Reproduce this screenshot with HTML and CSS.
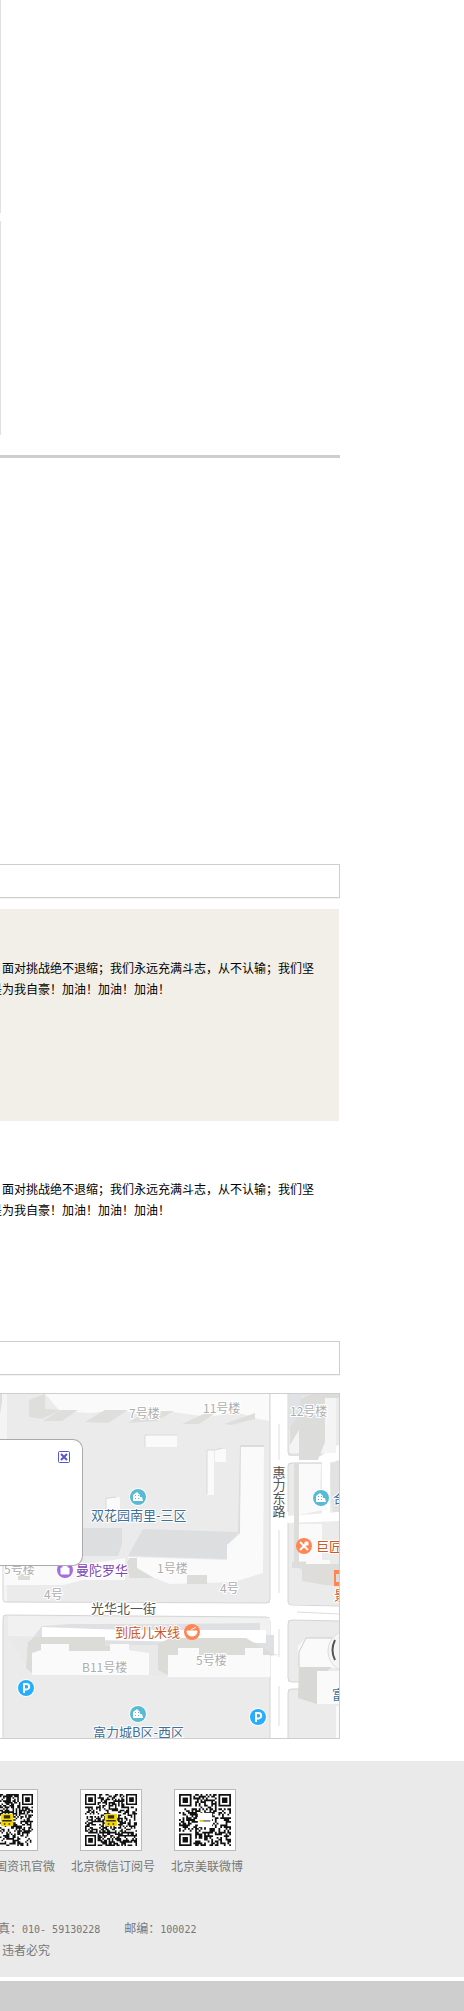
FILE: index.html
```
<!DOCTYPE html>
<html lang="zh-CN">
<head>
<meta charset="utf-8">
<title>北京美联</title>
<link rel="stylesheet" href="styles.css">
</head>
<body>
<main class="page">
  <section class="gallery"><div class="rail"></div><div class="rail"></div></section>
  <section class="showcase"></section>
  <div class="bar"></div>
  <article class="story story-tint"><p>，面对挑战绝不退缩；我们永远充满斗志，从不认输；我们坚<br>是为我自豪！加油！加油！加油！</p></article>
  <article class="story"><p>，面对挑战绝不退缩；我们永远充满斗志，从不认输；我们坚<br>是为我自豪！加油！加油！加油！</p></article>
  <div class="bar bar-map"></div>
  <section class="map">
    <svg class="map-art" viewBox="0 0 339 344" role="img" aria-label="地图">
      <defs>
        <g id="estate"><circle r="9" fill="#fff"/><circle r="8" fill="#58bad3"/><path d="M-5 4v-6l4-3 3 3v2h2l1 4zM-3-2v1h1v-1zm3 0v1h1v-1zm-3 3v1h1V1zm3 0v1h1V1z" fill="#fff" fill-rule="evenodd"/></g>
        <g id="parking"><circle r="9" fill="#fff"/><circle r="8" fill="#27adfc"/><path d="M-2 5v-9h2.500a2.700 2.700 0 0 1 0 5.400H-2" fill="none" stroke="#fff" stroke-width="2"/></g>
      </defs>
      <rect width="339" height="344" fill="#ebebeb"/>
      <path d="M0 0h7v210H0z" fill="#f4f4f4"/><path d="M0 0h2v8l-2 12z" fill="#ddd"/>
      <!-- roads -->
      <path d="M270 0h18v344h-18zM0 208l270 1v14L0 221zM288 210l51 2v15l-51-1zM288 62h30q8-1 12-8l9-3v17l-51 1zM288 122l51-4v9l-51 2zM288 288l51-1v7l-51 1zM322 68h8v54h-8zM0 165h3v179H0z" fill="#fff"/>
      <path d="M3 172v33q0 3 3 3l260 1q4 0 4-4V0M3 344V224q0-3 3-3l260 2q4 0 4 4v117M288 0v58q0 3 4 3h30M288 118V72q0-3 4-3h30M288 129v79q0 3 4 3l47 1M339 227l-47-1q-4 0-4 4v54q0 4 4 4h34M288 344v-45q0-4 4-4h34" fill="none" stroke="#d5d5d5"/>
      <path d="M279 30v36M279 136v63M279 235v28M279 292v40M297 218l42 2" stroke="#ddd"/>
      <!-- north buildings -->
      <path d="M45 0h224v27l-15-3-17-6-29 5-35-5-18 5-35-7-30 3-30-2z" fill="#fafafa"/>
      <path d="M29 6L45 0v16l-16 7zM43 27l17-11h18l-16 11zM85 28l20-12h23l-20 13zM128 29l18-12h28l-17 10zM182 30l28-13h9l-20 13zM224 30l31-11v6l-24 6zM29 23l16-8 15 1-18 9z" fill="#dededc"/>
      <path d="M145 41h32v12h-32zM106 105l14-2v20h-14zM207 56h7v45h-7zM215 55h11v13h-11z" fill="#fafafa"/>
      <path d="M145 53V41h32M106 122v-18l10-1M207 100V56h8l8-2" fill="none" stroke="#d9d9d9"/>
      <path d="M83 134h39v16l-4 12H83zM143 135l95 3v2l-11 11v14l-99-3z" fill="#dcdee0"/>
      <path d="M238 138l2-87h24v2h-22l-2 87z" fill="#dcdcdc"/>
      <path d="M241 53h23l-1 126-13 4-17 5-63 2-15-6-27-2V163l99 3v-15l13-11zM4 172h73l48-8v22H83l-20 5H4z" fill="#fafafa"/>
      <path d="M129 164h8v10l17 10h-24l-5-10zM187 181h20v9h-20zM18 181l12-3v8H18z" fill="#dcdcda"/>
      <path d="M290 2h46v57h-46z" fill="#f4f4f4"/>
      <path d="M301 4l10-4h28v4h-14v44l-7 18h-19V36l-9 15V12z" fill="#dcdcda"/><path d="M289 36l12-20V3l9-3h-21z" fill="#e1e2e5"/>
      <path d="M299 70h22l-1 29 8 16-29 6zM299 130h23v36h8v7h-24v-6h-7z" fill="#fafafa"/><path d="M294 69h5v105h-5zM306 170h33v10h-33z" fill="#dddddb"/>
      <path d="M331 69l8-3v52h-6q-4-24-2-52z" fill="#e2e2e2"/>
      <path d="M302 174h28l9 2v16l-14-1-23-4z" fill="#deddda"/><path d="M292 168h14v6l-6 1v-1h-8z" fill="#dddddb"/>
      <!-- south buildings -->
      <path d="M8 222l262 2v18H8z" fill="#f1f1f1"/>
      <path d="M8 243h34l28-11 192 4v47H168v-1H149v-1H32z" fill="#e9e9e9"/>
      <path d="M42 232l28-2h100l90-1v12h14v19l6 1-18 1-13-11H110L76 247l-50 8 8-13z" fill="#dfe0e3"/>
      <path d="M42 233l54 2 38 1h132v13l-70-1-154-3z" fill="#fff"/>
      <path d="M28 248l7-5h70v8l40 8v20H32l-6-5zM158 250l12-6h76l28 17-106 20-10-5z" fill="#dbdbd8"/>
      <path d="M41 250h28v7h41v-7h19v6l20 3v22H32v-22l9-3zM178 254h21v7h46v-7h18v7h7v22H168v-22h10z" fill="#fafafa"/>
      <path d="M298 252l8-8h33v30h-40z" fill="#fafafa"/><path d="M299 258l7-14h33M299 258v15" fill="none" stroke="#ccc"/>
      <path d="M299 273h33l-5 4h-10v33l-19-6z" fill="#d8d8d4"/><path d="M317 277h22v33h-22zM336 312h3v32h-3z" fill="#fafafa"/>
      <circle cx="349" cy="257" r="21" fill="#f5f5f5" stroke="#ddd"/><path d="M335 246q-5 10 0 20" fill="none" stroke="#555" stroke-width="2"/>
      <!-- points of interest -->
      <use href="#estate" x="138" y="103"/><use href="#estate" x="321" y="104"/><use href="#estate" x="138" y="320"/>
      <use href="#parking" x="26" y="294"/><use href="#parking" x="258" y="323"/>
      <g transform="translate(65 176)"><circle r="8" fill="#a66de0"/><path d="M-4 4v-6h8v6zM-2-2v-2h4v2" fill="#fff" stroke="#fff"/></g>
      <g transform="translate(304 152)"><circle r="8" fill="#ff8652"/><path d="M-4-4l8 8M4-4l-8 8" stroke="#fff" stroke-width="2"/><path d="M1-4l3 3" stroke="#fff" stroke-width="3"/></g>
      <g transform="translate(192 238)"><circle r="8" fill="#ff8652"/><path d="M-5-1H5q0 5-5 5t-5-5M-1-2l5-3" fill="#fff" stroke="#fff"/></g>
      <path d="M334 176h5v4h-5zM334 188h5v4h-5zM334 180h2v8h-2z" fill="#ff8652"/>
      <g class="minor">
        <text x="129" y="24">7号楼</text><text x="203" y="19">11号楼</text><text x="290" y="22">12号楼</text>
        <text x="4" y="180">5号楼</text><text x="157" y="179">1号楼</text><text x="44" y="205">4号</text><text x="220" y="199">4号</text>
        <text x="82" y="278">B11号楼</text><text x="196" y="271">5号楼</text>
      </g>
      <g class="place">
        <text x="91" y="126">双花园南里-三区</text><text x="93" y="343">富力城B区-西区</text>
        <text x="333" y="109">合</text><text x="332" y="305">富</text>
      </g>
      <g class="road">
        <text x="91" y="219">光华北一街</text>
        <text class="upright" x="279" y="72">惠力东路</text>
      </g>
      <g class="food"><text x="115" y="243">到底儿米线</text><text x="316" y="157">巨匠</text><text x="334" y="206">景</text></g>
      <text class="shop" x="76" y="181">曼陀罗华</text>
    </svg>
    <div class="popup"><button class="close" type="button" aria-label="关闭"><svg viewBox="0 0 12 12"><rect x=".5" y=".5" width="11" height="11" rx="1" fill="#fff" stroke="#5a55cf"/><path d="M3 3l6 6M9 3L3 9" stroke="#5a55cf" stroke-width="2"/></svg></button></div>
  </section>
</main>
<footer class="footer">
  <div class="codes">
    <figure class="code code-cut"><svg class="qr" data-size="33" data-seed="7" data-logo="yellow"></svg><figcaption>国资讯官微</figcaption></figure>
    <figure class="code"><svg class="qr" data-size="33" data-seed="19" data-logo="yellow"></svg><figcaption>北京微信订阅号</figcaption></figure>
    <figure class="code"><svg class="qr" data-size="29" data-seed="43" data-logo="white"></svg><figcaption>北京美联微博</figcaption></figure>
  </div>
  <div class="contact">
    <p><span>真：<span class="num">010- 59130228</span></span><span>邮编：<span class="num">100022</span></span></p>
    <p class="legal">，违者必究</p>
  </div>
</footer>
<div class="base"></div>
<script src="qr.js"></script>
</body>
</html>
```
FILE: styles.css
```
* { box-sizing: border-box; }
body {
  margin: 0;
  background: #fff;
  color: #000;
  font: 12px/21px "Noto Sans CJK SC", sans-serif;
  overflow-x: hidden;
}
p, figure { margin: 0; }
.page { max-width: 340px; }
.gallery {
  display: flex;
  flex-direction: column;
  gap: 8px;
  padding-bottom: 20px;
  border-bottom: 3px solid #cecece;
}
.rail { height: 213px; border-left: 1px solid #e4e0e1; }
.rail + .rail { height: 214px; }
.showcase { height: 406px; }
.bar {
  height: 34px;
  border: 1px solid #cecece;
  border-left: 0;
  box-shadow: 0 1px 0 #f3f3f3;
}
.story {
  height: 212px;
  margin: 8px 1px 0 0;
  padding-top: 49px;
  overflow: hidden;
}
.story-tint { margin-top: 11px; padding-top: 48px; background: #f2efe8; }
.story p { margin-left: -10px; white-space: nowrap; }
.map {
  position: relative;
  margin-top: 18px;
  border: 1px solid #cecece;
  border-left: 0;
  overflow: hidden;
}
.map-art { display: block; width: 100%; }
.map-art text {
  font-family: "Noto Sans CJK SC", sans-serif;
  font-size: 13px;
  stroke: #fff;
  stroke-width: 2px;
  paint-order: stroke;
}
.map-art .minor text { font-size: 12px; fill: #adadad; }
.place { fill: #426f98; }
.road { fill: #555; }
.upright { writing-mode: vertical-rl; }
.food { fill: #c85a2b; }
.shop { fill: #7c43b5; }
.popup {
  position: absolute;
  top: 45px;
  left: 0;
  width: 83px;
  height: 127px;
  padding: 11px 12px;
  background: #fff;
  border: 1px solid #aaa;
  border-left: 0;
  border-radius: 0 10px 10px 0;
}
.close { display: block; width: 12px; height: 12px; margin-left: auto; padding: 0; border: 0; background: none; }
.close svg { display: block; }
.footer {
  margin-top: 22px;
  height: 216px;
  padding-top: 28px;
  background: #eaeaea;
  color: #777;
  overflow: hidden;
}
.codes { display: flex; gap: 16px; }
.code { display: flex; flex-direction: column; align-items: center; gap: 4px; white-space: nowrap; }
.code .qr { margin-right: 5px; }
.code-cut { width: 55px; align-items: flex-end; }
.code-cut .qr { margin-right: 17px; }
.qr {
  width: 62px;
  height: 62px;
  padding: 4px;
  flex: none;
  background: #fff;
  border: 1px solid #bbb;
}
.contact { margin-top: 41px; line-height: 22px; }
.contact p { display: flex; gap: 24px; height: 22px; margin-left: -2px; white-space: pre; }
.contact .legal { margin-left: -10px; }
.num { font-family: "DejaVu Sans Mono", monospace; font-size: 10px; }
.base { height: 30px; margin-top: 4px; background: #cecece; }
```
FILE: qr.js
```
document.querySelectorAll(".qr").forEach(function (svg) {
  var n = Number(svg.dataset.size);
  var seed = Number(svg.dataset.seed);
  var d = "";
  function finder(x, y) {
    d += "M" + x + " " + y + "h7v7h-7zm1 1v5h5v-5zm1 1h3v3h-3z";
  }
  for (var y = 0; y < n; y++) {
    for (var x = 0; x < n; x++) {
      seed = (seed * 16807) % 2147483647;
      var corner = (x < 8 && (y < 8 || y > n - 9)) || (x > n - 9 && y < 8);
      if (!corner && (seed >> 8) % 2) d += "M" + x + " " + y + "h1v1h-1z";
    }
  }
  finder(0, 0);
  finder(n - 7, 0);
  finder(0, n - 7);
  var a = n / 2 - 4;
  var logo = svg.dataset.logo === "yellow"
    ? "<rect x='" + a + "' y='" + a + "' width='8' height='8' rx='1' fill='#f3d60d'/><path d='M" + (a + 2) + " " + (a + 1) + "h4v2h-4zm-1 3h6v1h-6zm1 2h1v1h-1zm3 0h1v1h-1z' fill='#332d10'/>"
    : "<rect x='" + a + "' y='" + a + "' width='8' height='8' fill='#fff'/><path d='M" + (a + 1) + " " + (a + 4) + "h2v1h-2z' fill='#e8c810'/><path d='M" + (a + 3) + " " + (a + 4) + "h4v1h-4z' fill='#888'/>";
  svg.setAttribute("viewBox", "0 0 " + n + " " + n);
  svg.innerHTML = "<path fill='#111' fill-rule='evenodd' d='" + d + "'/>" + logo;
});
```
